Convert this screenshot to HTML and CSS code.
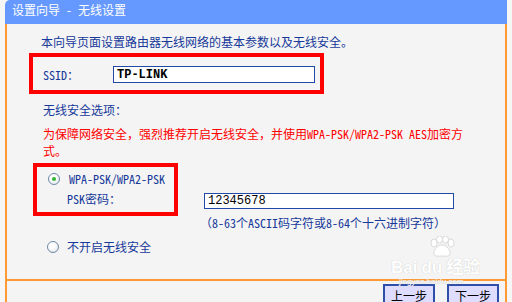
FILE: index.html
```html
<!DOCTYPE html>
<html lang="zh-CN">
<head>
  <meta charset="UTF-8">
  <title>设置向导 - 无线设置</title>
  <link rel="stylesheet" href="styles.css">
</head>
<body>

  <div class="window">
    <div class="title">设置向导 - 无线设置</div>

    <div class="content">
      <p class="intro">本向导页面设置路由器无线网络的基本参数以及无线安全。</p>

      <div class="mark ssid-box">
        <span class="ssid-label">SSID：</span>
        <input class="field ssid-field" type="text" value="TP-LINK">
      </div>

      <p class="section-title">无线安全选项：</p>
      <p class="warning">为保障网络安全，强烈推荐开启无线安全，并使用WPA-PSK/WPA2-PSK AES加密方式。</p>

      <div class="psk-row">
        <div class="mark psk-box">
          <div class="option"><span class="radio checked"></span>WPA-PSK/WPA2-PSK</div>
          <div class="psk-label">PSK密码：</div>
        </div>
        <input class="field psk-field" type="text" value="12345678">
      </div>
      <p class="hint">（8-63个ASCII码字符或8-64个十六进制字符）</p>

      <div class="option off"><span class="radio"></span>不开启无线安全</div>

      <!-- filigrane de la capture -->
      <div class="watermark">
        <svg class="paw" width="30" height="22" viewBox="0 0 30 22">
          <ellipse cx="7" cy="7" rx="3" ry="4"/>
          <ellipse cx="12.5" cy="3.5" rx="3" ry="3.5"/>
          <ellipse cx="18.5" cy="3.5" rx="3" ry="3.5"/>
          <ellipse cx="24" cy="7" rx="3" ry="4"/>
          <path d="M15 9 C10 9 6 15 7 18 C8 21 12 20 15 20 C18 20 22 21 23 18 C24 15 20 9 15 9 Z"/>
        </svg>
        <span class="wm-logo">Bai<span class="wm-du">du</span>经验</span>
        <span class="wm-url">jingyan.baidu.com</span>
      </div>
    </div>

    <div class="footer">
      <button class="step">上一步</button>
      <button class="step">下一步</button>
    </div>
  </div>

</body>
</html>
```

FILE: styles.css
```css
body {
  margin: 0;
  padding: 0;
  background-color: #f6f6f6;
  font-family: "Noto Sans Mono CJK SC", "Noto Sans CJK SC", monospace;
  font-size: 12px;
  line-height: 14px;
  color: #16399a;
}

p {
  margin: 0;
}

.window {
  margin: 0 5px;
}

.title {
  height: 24px;
  line-height: 20px;
  padding-left: 7px;
  background-color: #6699ff;
  color: white;
  border-top-left-radius: 5px;
}

.content {
  position: relative;
  background-color: #f4f4f4;
  border-left: 2px solid #ff9933;
  border-right: 2px solid #ff9933;
  border-bottom: 2px solid #ff9933;
  padding: 10px 0 25px 22px;
}

.intro {
  margin-left: 12px;
  line-height: 16px;
}

.mark {
  border: 4px solid #ff0000;
}

.ssid-box {
  display: flex;
  align-items: center;
  width: 272px;
  margin-top: 3px;
  padding: 9px 5px 7px 10px;
}

.ssid-label {
  width: 70px;
}

.field {
  box-sizing: border-box;
  margin: 0;
  padding: 0 3px;
  border: 1px solid #2248a8;
  background: white;
  font-family: "Liberation Mono", "Noto Sans Mono CJK SC", monospace;
  font-size: 12px;
  color: #000;
  outline: none;
}

.ssid-field {
  width: 202px;
  height: 17px;
  font-weight: bold;
}

.section-title {
  margin: 8px 0 0 14px;
  line-height: 16px;
}

.warning {
  width: 426px;
  margin: 7px 0 0 14px;
  line-height: 17px;
  color: #ff0000;
}

.psk-row {
  display: flex;
  align-items: flex-end;
  margin-top: 4px;
  margin-left: 4px;
}

.psk-box {
  width: 126px;
  padding: 5px 0 6px 11px;
}

.option {
  display: flex;
  align-items: center;
  gap: 9px;
}

.psk-label {
  margin: 6px 0 0 19px;
}

.psk-field {
  width: 250px;
  height: 16px;
  margin: 0 0 7px 26px;
}

.hint {
  margin-left: 171px;
}

.off {
  margin: 10px 0 0 18px;
  gap: 8px;
}

.radio {
  width: 12px;
  height: 12px;
  box-sizing: border-box;
  border: 1px solid #6f88a8;
  border-radius: 50%;
  background: radial-gradient(circle at 40% 35%, #ffffff 30%, #d9dde3 100%);
  position: relative;
}

.radio.checked::after {
  content: "";
  position: absolute;
  left: 3px;
  top: 3px;
  width: 4px;
  height: 4px;
  border-radius: 50%;
  background: #2fb52f;
}

.watermark {
  position: absolute;
  left: 384px;
  top: 212px;
  width: 100px;
  color: #ffffff;
  text-shadow: 0 0 1px #bdbdbd;
  font-family: "Liberation Sans", sans-serif;
}

.paw {
  display: block;
  margin-left: 36px;
  fill: #ffffff;
  stroke: #d0d0d0;
  stroke-width: 0.8;
}

.wm-logo {
  display: block;
  margin-top: 1px;
  font-size: 17px;
  font-weight: bold;
  line-height: 18px;
  font-family: "Liberation Sans", "Noto Sans CJK SC", sans-serif;
}

.wm-du {
  margin: 0 4px;
}

.wm-url {
  display: block;
  margin-left: 8px;
  font-size: 8px;
  line-height: 9px;
  color: #fafafa;
}

.footer {
  display: flex;
  justify-content: flex-end;
  gap: 12px;
  height: 30px;
  padding: 3px 6px 0 0;
  background-color: #f4f4f4;
  border-left: 2px solid #ff9933;
  border-right: 2px solid #ff9933;
}

.step {
  width: 52px;
  height: 22px;
  padding: 0;
  border: 2px solid #2e4ea8;
  background-color: #dedcff;
  font-family: "Noto Sans Mono CJK SC", "Noto Sans CJK SC", monospace;
  font-size: 12px;
  color: #000;
}
```
